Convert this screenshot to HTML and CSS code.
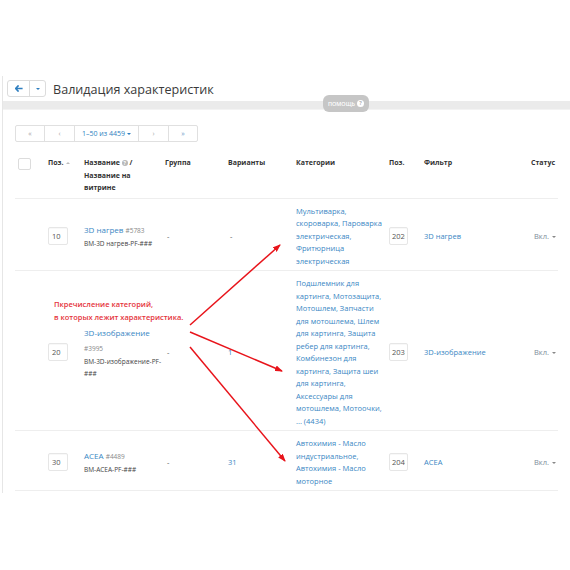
FILE: index.html
```html
<!DOCTYPE html>
<html lang="ru">
<head>
<meta charset="utf-8">
<title>Валидация характеристик</title>
<link rel="stylesheet" href="styles.css">
</head>
<body>
<div class="page">
  <div class="header">
    <div class="btn-group">
      <span class="btn btn-back">
        <svg width="8" height="7" viewBox="0 0 8 7"><path d="M3.6 0.4 L0.6 3.5 L3.6 6.6 M0.9 3.5 H7.6" fill="none" stroke="#2f7fc0" stroke-width="1.6" stroke-linejoin="round"/></svg>
      </span>
      <span class="btn btn-caret"><span class="caret"></span></span>
    </div>
    <h1 class="title">Валидация характеристик</h1>
  </div>
  <div class="helpbar">
    <span class="help-badge">ПОМОЩЬ <span class="help-q">?</span></span>
  </div>
  <div class="content">
    <div class="pager">
      <span class="pg pg-first">«</span>
      <span class="pg pg-prev">‹</span>
      <span class="pg pg-range">1–50 из 4459 <span class="caret caret-blue"></span></span>
      <span class="pg pg-next">›</span>
      <span class="pg pg-last">»</span>
    </div>
    <table class="grid">
      <colgroup>
        <col class="c-check"><col class="c-pos"><col class="c-name"><col class="c-group"><col class="c-var"><col class="c-cat"><col class="c-pos2"><col class="c-filter"><col class="c-status">
      </colgroup>
      <thead>
        <tr>
          <th><span class="checkbox"></span></th>
          <th>Поз. <span class="sort"></span></th>
          <th>Название <span class="info">?</span> /<br>Название на витрине</th>
          <th>Группа</th>
          <th>Варианты</th>
          <th>Категории</th>
          <th>Поз.</th>
          <th>Фильтр</th>
          <th>Статус</th>
        </tr>
      </thead>
      <tbody>
        <tr>
          <td></td>
          <td class="mid"><input class="num" value="10"></td>
          <td class="mid"><div class="name"><a class="link">3D нагрев</a> <span class="id">#5783</span></div><div class="code">BM-3D нагрев-PF-###</div></td>
          <td class="mid plain">-</td>
          <td class="mid plain">-</td>
          <td class="cats">Мультиварка,<br>скороварка, Пароварка<br>электрическая,<br>Фритюрница<br>электрическая</td>
          <td class="mid"><input class="num pos2" value="2026"></td>
          <td class="mid"><a class="link">3D нагрев</a></td>
          <td class="mid"><span class="status">Вкл. <span class="caret caret-gray"></span></span></td>
        </tr>
        <tr>
          <td></td>
          <td class="mid"><input class="num" value="20"></td>
          <td class="mid"><div class="name"><a class="link">3D-изображение</a><br><span class="id">#3995</span></div><div class="code">BM-3D-изображение-PF-<br>###</div></td>
          <td class="mid plain">-</td>
          <td class="mid"><a class="link">1</a></td>
          <td class="cats">Подшлемник для<br>картинга, Мотозащита,<br>Мотошлем, Запчасти<br>для мотошлема, Шлем<br>для картинга, Защита<br>ребер для картинга,<br>Комбинезон для<br>картинга, Защита шеи<br>для картинга,<br>Аксессуары для<br>мотошлема, Мотоочки,<br>... (4434)</td>
          <td class="mid"><input class="num pos2" value="2038"></td>
          <td class="mid"><a class="link">3D-изображение</a></td>
          <td class="mid"><span class="status">Вкл. <span class="caret caret-gray"></span></span></td>
        </tr>
        <tr>
          <td></td>
          <td class="mid"><input class="num" value="30"></td>
          <td class="mid"><div class="name"><a class="link">ACEA</a> <span class="id">#4489</span></div><div class="code">BM-ACEA-PF-###</div></td>
          <td class="mid plain">-</td>
          <td class="mid"><a class="link">31</a></td>
          <td class="cats">Автохимия - Масло<br>индустриальное,<br>Автохимия - Масло<br>моторное</td>
          <td class="mid"><input class="num pos2" value="2040"></td>
          <td class="mid"><a class="link">ACEA</a></td>
          <td class="mid"><span class="status">Вкл. <span class="caret caret-gray"></span></span></td>
        </tr>
      </tbody>
    </table>
  </div>
</div>

<div class="note">Пкречисление категорий,<br>в которых лежит характеристика.</div>
<svg class="arrows" width="570" height="570" viewBox="0 0 570 570">
  <defs>
    <marker id="ah" markerWidth="8" markerHeight="6" refX="7" refY="3" orient="auto" markerUnits="userSpaceOnUse">
      <path d="M0 0 L8 3 L0 6 Z" fill="#e8141b"/>
    </marker>
  </defs>
  <line x1="190" y1="325" x2="280" y2="245" stroke="#e8141b" stroke-width="1.5" marker-end="url(#ah)"/>
  <line x1="190" y1="332" x2="282" y2="371" stroke="#e8141b" stroke-width="1.5" marker-end="url(#ah)"/>
  <line x1="190" y1="347" x2="285" y2="461" stroke="#e8141b" stroke-width="1.5" marker-end="url(#ah)"/>
</svg>
</body>
</html>
```

FILE: styles.css
```css
html, body {
  margin: 0;
  padding: 0;
  background: #fff;
}
body {
  font-family: "Open Sans", "Noto Sans", sans-serif;
  color: #555;
  width: 570px;
  height: 570px;
  overflow: hidden;
  position: relative;
}
.page {
  margin: 76px 0 0 2px;
  border-left: 1px solid #e6e6e6;
  padding-bottom: 2px;
}
.header {
  height: 25px;
  display: flex;
  align-items: center;
  padding-left: 4px;
  gap: 7px;
}
.btn-group {
  display: flex;
  height: 17px;
  border: 1px solid #dcdcdc;
  border-radius: 3px;
  box-sizing: border-box;
  background: #fff;
}
.btn {
  display: flex;
  align-items: center;
  justify-content: center;
}
.btn-back {
  width: 21px;
  border-right: 1px solid #dcdcdc;
}
.btn-caret {
  width: 15px;
}
.caret {
  display: inline-block;
  width: 0;
  height: 0;
  border-left: 2px solid transparent;
  border-right: 2px solid transparent;
  border-top: 2.5px solid #2f7fc0;
  vertical-align: middle;
}
.caret-blue { border-top-color: #2f7fc0; }
.caret-gray { border-top-color: #888; margin-left: 1px; }
.title {
  margin: 0;
  font-size: 12.6px;
  font-weight: 400;
  color: #3a3a3a;
  line-height: 16px;
  padding-top: 2px;
}
.helpbar {
  height: 8px;
  background: #ebebeb;
  border-bottom: 1px solid #f3f3f3;
  position: relative;
}
.help-badge {
  position: absolute;
  left: 320px;
  top: -6px;
  width: 46px;
  height: 17px;
  box-sizing: border-box;
  border-radius: 6px;
  background: #c6c6c6;
  color: #fff;
  font-size: 5.5px;
  font-weight: 600;
  display: flex;
  align-items: center;
  justify-content: center;
  gap: 2px;
}
.help-q {
  width: 7px;
  height: 7px;
  border-radius: 50%;
  background: #fff;
  color: #b5b5b5;
  font-size: 5.5px;
  font-weight: 700;
  line-height: 7px;
  text-align: center;
}
.content {
  padding: 15px 12px 0 12px;
}
.pager {
  display: flex;
  width: fit-content;
  height: 17px;
  border: 1px solid #e0e0e0;
  border-radius: 2px;
  box-sizing: border-box;
  font-size: 7px;
}
.pg {
  display: flex;
  align-items: center;
  justify-content: center;
  border-right: 1px solid #e0e0e0;
  color: #a8a8a8;
}
.pg-first { width: 28px; }
.pg-prev { width: 29px; }
.pg-range { width: 63px; color: #2f7fc0; gap: 2px; }
.pg-next { width: 29px; }
.pg-last { width: 28px; border-right: 0; color: #6a9cc8; }
.grid {
  table-layout: fixed;
  border-collapse: collapse;
  width: 543px;
  margin-top: 6px;
}
.c-check { width: 30px; }
.c-pos { width: 36px; }
.c-name { width: 81px; }
.c-group { width: 63px; }
.c-var { width: 68px; }
.c-cat { width: 93px; }
.c-pos2 { width: 35px; }
.c-filter { width: 107px; }
.c-status { width: 30px; }
th {
  text-align: left;
  vertical-align: top;
  font-size: 7px;
  font-weight: 700;
  color: #333;
  line-height: 12.5px;
  padding: 9px 3px 3px 3px;
  border-bottom: 1px solid #eeeeee;
}
.checkbox {
  display: block;
  width: 13px;
  height: 12px;
  border: 1px solid #dcdcdc;
  border-radius: 2px;
  box-sizing: border-box;
  margin-top: 1px;
}
.sort {
  display: inline-block;
  width: 0;
  height: 0;
  border-left: 2px solid transparent;
  border-right: 2px solid transparent;
  border-bottom: 2.5px solid #bbb;
  vertical-align: middle;
  margin-left: 1px;
}
.info {
  display: inline-block;
  width: 6px;
  height: 6px;
  border-radius: 50%;
  background: #b8b8b8;
  color: #fff;
  font-size: 5px;
  line-height: 6px;
  text-align: center;
  vertical-align: 0;
}
td {
  font-size: 7.5px;
  line-height: 12.5px;
  padding: 6px 3px 3px 3px;
  border-bottom: 1px solid #eeeeee;
  vertical-align: top;
}
td.mid { vertical-align: middle; }
.plain { color: #555; padding-left: 5px; }
.link { color: #3a87c4; text-decoration: none; }
.cats { color: #3a87c4; white-space: nowrap; }
.num {
  display: block;
  width: 20px;
  height: 18px;
  box-sizing: border-box;
  border: 1px solid #e6e6e6;
  border-radius: 2px;
  box-shadow: inset 0 1px 1px rgba(0,0,0,0.03);
  padding: 0 3px;
  font-family: "Open Sans", sans-serif;
  font-size: 7.5px;
  color: #555;
  background: #fff;
  margin: 0;
}
.num.pos2 { width: 19px; padding: 0 2px; }
.name {
  font-size: 8px;
  line-height: 15px;
}
.id {
  font-size: 6.5px;
  color: #888;
}
.code {
  font-size: 6.5px;
  line-height: 12px;
  color: #444;
  white-space: nowrap;
}
.status {
  color: #7d8c99;
  margin-left: 3px;
  white-space: nowrap;
}
.note {
  position: absolute;
  left: 54px;
  top: 298px;
  font-size: 7.5px;
  line-height: 12.5px;
  font-weight: 600;
  color: #e5333c;
}
.arrows {
  position: absolute;
  left: 0;
  top: 0;
  pointer-events: none;
}
```
